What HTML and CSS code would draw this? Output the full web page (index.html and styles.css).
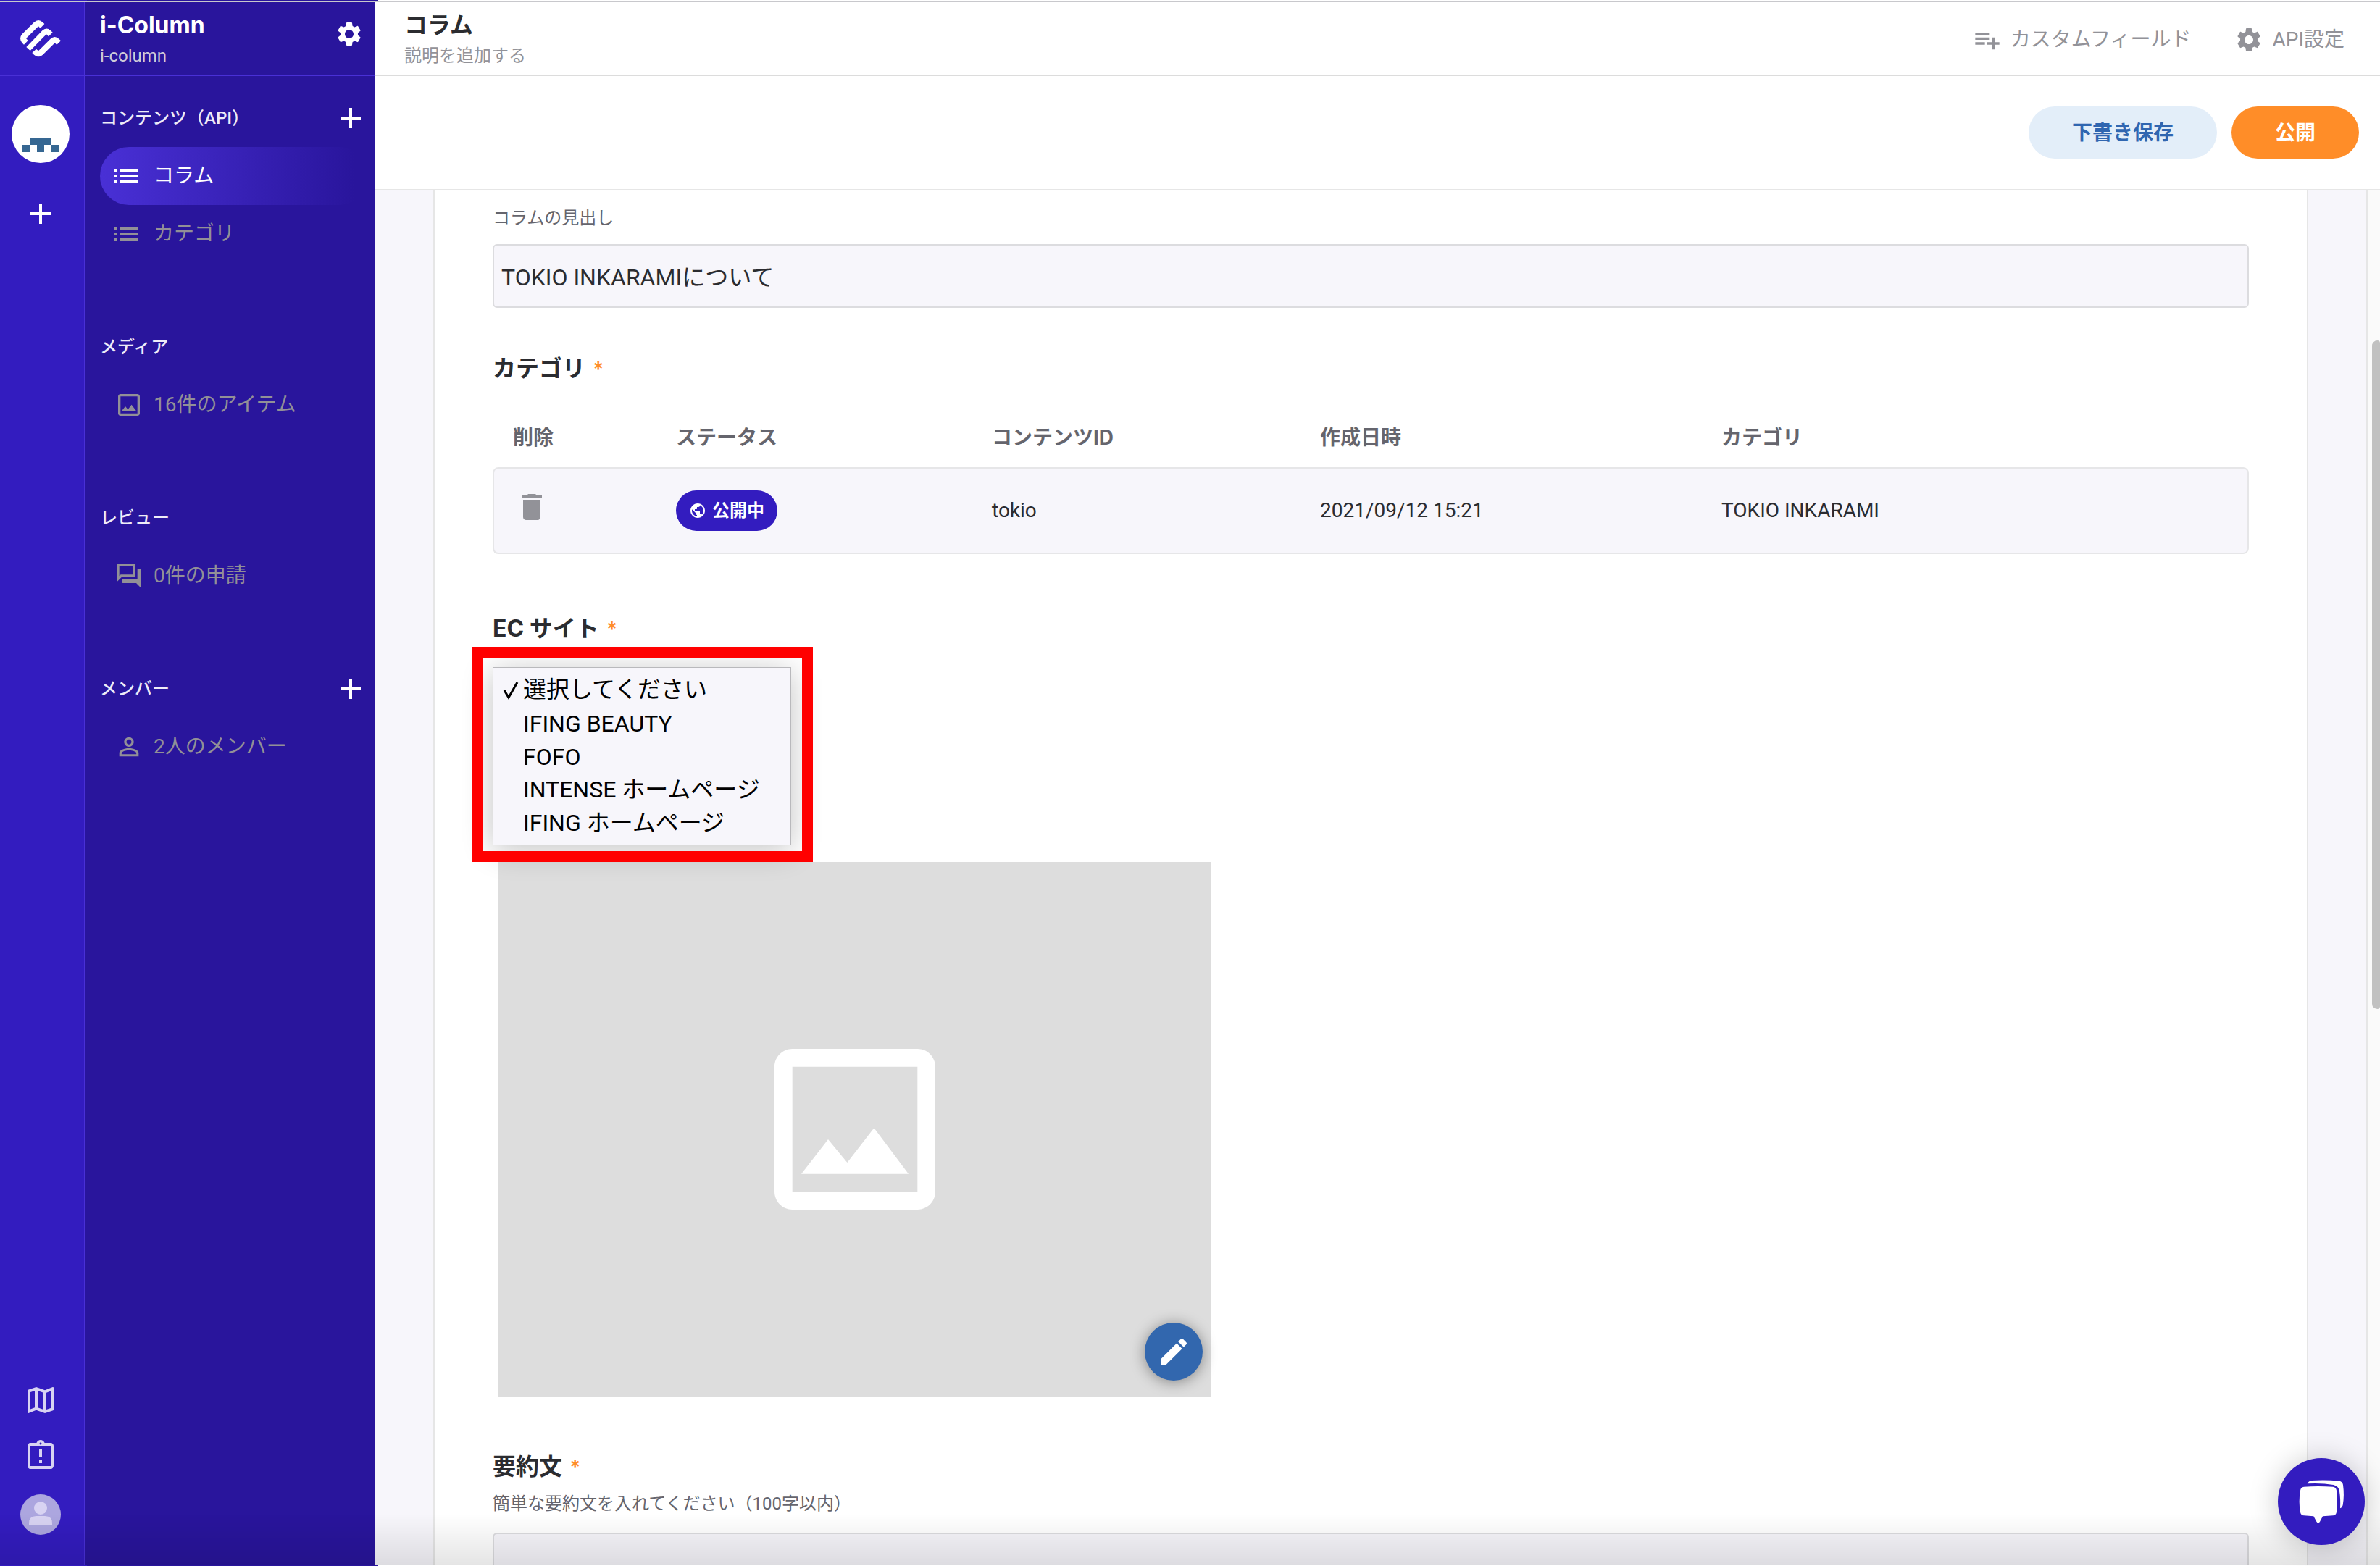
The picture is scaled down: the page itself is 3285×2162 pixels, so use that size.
FILE: index.html
```html
<!DOCTYPE html>
<html lang="ja">
<head>
<meta charset="utf-8">
<title>コラム | i-Column</title>
<link rel="stylesheet" href="styles.css">
</head>
<body>
<svg class="defs" aria-hidden="true">
  <symbol id="i-add" viewBox="0 0 24 24"><path d="M19 13h-6v6h-2v-6H5v-2h6V5h2v6h6z"/></symbol>
  <symbol id="i-gear" viewBox="0 0 24 24"><path d="M19.14 12.94c.04-.3.06-.61.06-.94 0-.32-.02-.64-.07-.94l2.03-1.58c.18-.14.23-.41.12-.61l-1.92-3.32c-.12-.22-.37-.29-.59-.22l-2.39.96c-.5-.38-1.03-.7-1.62-.94l-.36-2.54c-.04-.24-.24-.41-.48-.41h-3.84c-.24 0-.43.17-.47.41l-.36 2.54c-.59.24-1.13.57-1.62.94l-2.39-.96c-.22-.08-.47 0-.59.22L2.74 8.87c-.12.21-.08.47.12.61l2.03 1.58c-.05.3-.09.63-.09.94s.02.64.07.94l-2.03 1.58c-.18.14-.23.41-.12.61l1.92 3.32c.12.22.37.29.59.22l2.39-.96c.5.38 1.03.7 1.62.94l.36 2.54c.05.24.24.41.48.41h3.84c.24 0 .44-.17.47-.41l.36-2.54c.59-.24 1.13-.56 1.62-.94l2.39.96c.22.08.47 0 .59-.22l1.92-3.32c.12-.22.07-.47-.12-.61l-2.01-1.58zM12 15.6c-1.98 0-3.6-1.62-3.6-3.6s1.62-3.6 3.6-3.6 3.6 1.62 3.6 3.6-1.62 3.6-3.6 3.6z"/></symbol>
  <symbol id="i-list" viewBox="0 0 40 40"><path d="M0 10h4v4H0zM8 10h24v4H8zM0 18h4v4H0zM8 18h24v4H8zM0 26h4v4H0zM8 26h24v4H8z"/></symbol>
  <symbol id="i-image" viewBox="0 0 24 24"><path d="M19 5v14H5V5h14m0-2H5c-1.100 0-2 .9-2 2v14c0 1.100.9 2 2 2h14c1.100 0 2-.9 2-2V5c0-1.100-.9-2-2-2zm-4.860 8.860l-3 3.870L9 13.140 6 17h12l-3.860-5.140z"/></symbol>
</svg>

<div class="window">
<div class="shell">
  <nav class="rail" aria-label="サービス">
    <a class="logo" href="#" aria-label="ホーム">
      <svg viewBox="80 80 180 160"><path d="M186 100l-7-7q-18-16-36 0l-50 50q-14 17 0 35l8 8 17-17-8-9 51-50 8 8zM111 196l66-68q17-16 34-1l9 8-17 17-9-9-67 68zM254 170l-8-8q-17-16-35 0l-50 50-9-8-17 16 8 8q18 16 36 0l50-49 8 7z"/></svg>
    </a>
    <a class="service" href="#" aria-label="i-Column">
      <svg viewBox="0 0 80 80"><path d="M25 45h30v10H25zM15 55h10v10H15zM35 55h10v10H35zM55 55h10v10H55z"/></svg>
    </a>
    <button class="icon-btn" aria-label="サービスを追加"><svg class="i48"><use href="#i-add"/></svg></button>
    <div class="rail-foot">
      <a href="#" aria-label="ガイド"><svg class="i48" viewBox="0 0 24 24"><path d="M20.500 3l-.16.030L15 5.100 9 3 3.360 4.900c-.21.070-.36.250-.36.480V20.500c0 .28.220.5.500.5l.16-.030L9 18.900l6 2.100 5.640-1.900c.21-.070.360-.250.360-.480V3.500c0-.28-.22-.5-.5-.5zM10 5.470l4 1.400v11.660l-4-1.400V5.470zm-5 .99l3-1.010v11.700l-3 1.160V6.460zm14 11.080l-3 1.010V6.860l3-1.160v11.840z"/></svg></a>
      <a href="#" aria-label="お知らせ"><svg class="i48" viewBox="0 0 24 24"><path d="M11 15h2v2h-2zm0-8h2v6h-2z"/><path d="M19 3h-4.180C14.400 1.840 13.300 1 12 1s-2.400.84-2.820 2H5c-1.100 0-2 .9-2 2v14c0 1.100.9 2 2 2h14c1.100 0 2-.9 2-2V5c0-1.100-.9-2-2-2zm-7-.250c.41 0 .75.340.75.750s-.34.750-.75.750-.75-.34-.75-.75.340-.750.750-.750zM19 19H5V5h14v14z"/></svg></a>
      <a class="user" href="#" aria-label="アカウント"><svg viewBox="0 0 56 56"><circle cx="28" cy="19" r="9"/><path d="M12 42v-2q0-10 10-10h12q10 0 10 10v2z"/></svg></a>
    </div>
  </nav>

  <aside class="sidebar">
    <header class="side-head">
      <div class="names">
        <strong class="service-name">i-Column</strong>
        <span class="service-id">i-column</span>
      </div>
      <button class="icon-btn gear" aria-label="設定"><svg class="i40"><use href="#i-gear"/></svg></button>
    </header>
    <div class="side-body">
      <section>
        <h2 class="side-title">コンテンツ（API）<button class="icon-btn" aria-label="APIを追加"><svg class="i48"><use href="#i-add"/></svg></button></h2>
        <a class="side-item active" href="#"><svg class="i40"><use href="#i-list"/></svg>コラム</a>
        <a class="side-item" href="#"><svg class="i40"><use href="#i-list"/></svg>カテゴリ</a>
      </section>
      <section>
        <h2 class="side-title">メディア</h2>
        <a class="side-item" href="#"><svg class="i40"><use href="#i-image"/></svg>16件のアイテム</a>
      </section>
      <section>
        <h2 class="side-title">レビュー</h2>
        <a class="side-item" href="#"><svg class="i40" viewBox="0 0 24 24"><path d="M15 4v7H5.170L4 12.170V4h11m1-2H3c-.55 0-1 .45-1 1v14l4-4h10c.55 0 1-.45 1-1V3c0-.55-.45-1-1-1zm5 4h-2v9H6v2c0 .55.450 1 1 1h11l4 4V7c0-.55-.45-1-1-1z"/></svg>0件の申請</a>
      </section>
      <section>
        <h2 class="side-title">メンバー<button class="icon-btn" aria-label="メンバーを追加"><svg class="i48"><use href="#i-add"/></svg></button></h2>
        <a class="side-item" href="#"><svg class="i40" viewBox="0 0 24 24"><path d="M12 5.900c1.160 0 2.100.94 2.100 2.100s-.94 2.100-2.100 2.100S9.900 9.160 9.900 8s.94-2.100 2.100-2.100m0 9c2.970 0 6.100 1.460 6.100 2.100v1.100H5.900V17c0-.64 3.130-2.100 6.100-2.100M12 4C9.790 4 8 5.790 8 8s1.790 4 4 4 4-1.790 4-4-1.790-4-4-4zm0 9c-2.670 0-8 1.340-8 4v3h16v-3c0-2.660-5.330-4-8-4z"/></svg>2人のメンバー</a>
      </section>
    </div>
  </aside>

  <main class="main">
    <header class="main-head">
      <div class="names">
        <h1 class="page-title">コラム</h1>
        <span class="page-desc">説明を追加する</span>
      </div>
      <a class="head-link" href="#"><svg class="i40" viewBox="0 0 24 24"><path d="M14 10H2v2h12v-2zm0-4H2v2h12V6zm4 8v-4h-2v4h-4v2h4v4h2v-4h4v-2h-4zM2 16h8v-2H2v2z"/></svg>カスタムフィールド</a>
      <a class="head-link" href="#"><svg class="i40"><use href="#i-gear"/></svg>API設定</a>
    </header>
    <div class="actions">
      <button class="btn draft">下書き保存</button>
      <button class="btn publish">公開</button>
    </div>
    <div class="scroller">
      <div class="content">
        <form class="card">
          <label class="hint" for="heading">コラムの見出し</label>
          <input class="text-input" id="heading" type="text" value="TOKIO INKARAMIについて">

          <h3 class="field-title">カテゴリ<span class="req">*</span></h3>
          <table class="refs">
            <colgroup><col class="c-del"><col class="c-status"><col class="c-id"><col class="c-date"><col></colgroup>
            <thead><tr><th>削除</th><th>ステータス</th><th>コンテンツID</th><th>作成日時</th><th>カテゴリ</th></tr></thead>
            <tbody><tr>
              <td><button class="icon-btn trash" type="button" aria-label="削除"><svg class="i48" viewBox="0 0 24 24"><path d="M6 19c0 1.100.9 2 2 2h8c1.100 0 2-.9 2-2V7H6v12zM19 4h-3.500l-1-1h-5l-1 1H5v2h14V4z"/></svg></button></td>
              <td><span class="badge"><svg viewBox="0 0 24 24"><path d="M12 2C6.480 2 2 6.480 2 12s4.480 10 10 10 10-4.480 10-10S17.520 2 12 2zm-1 17.930c-3.950-.49-7-3.850-7-7.930 0-.62.080-1.210.21-1.790L9 15v1c0 1.100.9 2 2 2v1.930zm6.900-2.540c-.26-.81-1-1.390-1.900-1.390h-1v-3c0-.55-.45-1-1-1H8v-2h2c.55 0 1-.45 1-1V7h2c1.100 0 2-.9 2-2v-.41c2.930 1.190 5 4.060 5 7.410 0 2.080-.8 3.970-2.100 5.390z"/></svg>公開中</span></td>
              <td>tokio</td>
              <td>2021/09/12 15:21</td>
              <td>TOKIO INKARAMI</td>
            </tr></tbody>
          </table>

          <label class="field-title" for="ec">EC サイト<span class="req">*</span></label>
          <div class="menu">
            <select id="ec" size="5">
              <option selected>選択してください</option>
              <option>IFING BEAUTY</option>
              <option>FOFO</option>
              <option>INTENSE ホームページ</option>
              <option>IFING ホームページ</option>
            </select>
            <svg class="check" viewBox="0 0 22 32"><path d="M2 16l6 10L20 5"/></svg>
          </div>

          <div class="picture">
            <svg class="placeholder"><use href="#i-image"/></svg>
            <button class="edit" type="button" aria-label="画像を編集"><svg class="i48" viewBox="0 0 24 24"><path d="M3 17.250V21h3.750L17.810 9.940l-3.750-3.750L3 17.250zM20.710 7.040c.39-.39.390-1.020 0-1.410l-2.340-2.340c-.39-.39-1.020-.39-1.410 0l-1.830 1.830 3.750 3.750 1.830-1.830z"/></svg></button>
          </div>

          <label class="field-title" for="summary">要約文<span class="req">*</span></label>
          <span class="hint">簡単な要約文を入れてください（100字以内）</span>
          <textarea class="text-input area" id="summary"></textarea>
        </form>
      </div>
      <div class="track"><div class="thumb"></div></div>
    </div>
  </main>
</div>
</div>
<div class="shade"></div>
<button class="chat" aria-label="チャット">
  <svg viewBox="177 158 360 360"><path d="M285 277q57-4 120 0 13 1 15 15 6 46 0 90-2 12-15 14-20 2-42 3l-12 22q-7 12-14 0l-12-22q-20-1-40-3-13-2-15-14-8-45 0-90 2-14 15-15z"/><path d="M299 264q5-11 18-13 58-4 114 2 14 2 16 16 6 44-1 84-2 10-11 13 2-40-3-70-3-22-25-27-48-8-108-5z"/></svg>
</button>
</body>
</html>
```
FILE: styles.css
```css
* { box-sizing: border-box; }

:root {
  --blue: #331cbf;
  --navy: #29159c;
  --line: #4930d6;
  --ink: #2b2c30;
  --sub: #65656d;
  --mute: #929298;
  --field: #f7f6fb;
  --orange: #ff8d28;
}

body {
  margin: 0;
  color: var(--ink);
  font-family: Roboto, "Noto Sans CJK JP", sans-serif;
  font-size: 28px;
  line-height: 40px;
}

h1, h2, h3 { margin: 0; }
a { color: inherit; text-decoration: none; }
svg { display: block; fill: currentColor; flex: none; }
button, input, select, textarea { font: inherit; color: inherit; }
button { border: 0; padding: 0; background: none; cursor: pointer; }

.defs { display: none; }
.i40 { width: 40px; height: 40px; }
.i48 { width: 48px; height: 48px; }
.icon-btn { display: block; color: #fff; }

.window {
  height: 100vh;
  padding: 2px 0;
  background: linear-gradient(to right, var(--blue) 120px, var(--navy) 120px 522px, #fff 522px);
}
.shell {
  display: flex;
  height: 100%;
  border-top: 1px solid #c8c8cc;
}

.rail {
  display: flex;
  flex-direction: column;
  align-items: center;
  flex: none;
  width: 118px;
  padding-right: 4px;
  border-right: 2px solid var(--line);
  background: var(--blue);
  color: #fff;
}
.logo {
  display: flex;
  align-items: center;
  justify-content: center;
  align-self: stretch;
  height: 102px;
  margin-right: -4px;
  padding-right: 4px;
  border-bottom: 2px solid var(--line);
}
.logo svg { width: 60px; height: 54px; }
.service {
  width: 80px;
  height: 80px;
  margin: 40px 0 46px;
  border-radius: 50%;
  background: #fff;
  color: #366792;
}
.rail-foot {
  display: flex;
  flex-direction: column;
  align-items: center;
  gap: 29px;
  margin-top: auto;
  padding-bottom: 41px;
  color: #d8d3f2;
}
.user {
  width: 56px;
  height: 56px;
  border-radius: 50%;
  background: #aca6df;
}

.sidebar {
  flex: none;
  width: 400px;
  background: var(--navy);
  color: #fff;
}
.side-head {
  display: flex;
  justify-content: space-between;
  height: 102px;
  padding: 12px 16px 0 20px;
  border-bottom: 2px solid var(--line);
}
.names { display: flex; flex-direction: column; gap: 2px; }
.service-name {
  font-family: Inter, sans-serif;
  font-size: 32px;
}
.service-id { font-size: 24px; color: #cfcbd9; }
.gear { height: 64px; }
.side-body {
  display: flex;
  flex-direction: column;
  gap: 76px;
  padding: 18px 10px 0 20px;
}
.side-title {
  display: flex;
  align-items: center;
  justify-content: space-between;
  height: 80px;
  color: #eeecf8;
  font-size: 24px;
  font-weight: 500;
}
.side-item {
  display: flex;
  align-items: center;
  gap: 14px;
  height: 80px;
  padding-left: 20px;
  border-radius: 40px;
  color: #929097;
}
.active {
  background: linear-gradient(to right, var(--line), var(--navy) 95%);
  color: #fff;
}

.main {
  display: flex;
  flex-direction: column;
  flex: 1;
  min-width: 0;
  background: #fff;
}
.main-head {
  display: flex;
  flex: none;
  height: 102px;
  padding: 12px 49px 0 40px;
  border-bottom: 2px solid #dcdcdc;
}
.main-head .names { flex: 1; }
.page-title { font-size: 32px; line-height: 40px; }
.page-desc { font-size: 24px; color: var(--mute); }
.head-link {
  display: flex;
  align-items: center;
  gap: 12px;
  height: 80px;
  margin-left: 60px;
  color: var(--mute);
}
.actions {
  display: flex;
  align-items: center;
  justify-content: flex-end;
  flex: none;
  gap: 20px;
  height: 158px;
  padding-right: 29px;
  border-bottom: 2px solid #e6e6e6;
}
.btn {
  height: 72px;
  padding: 2px 60px 0;
  border-radius: 36px;
  font-weight: 700;
}
.draft { background: #e3eef9; color: #3066b0; }
.publish { background: var(--orange); color: #fff; }

.scroller { display: flex; flex: 1; min-height: 0; }
.content {
  flex: 1;
  min-width: 0;
  padding: 0 80px;
  overflow: hidden;
  background: var(--field);
}
.card {
  display: flex;
  flex-direction: column;
  align-items: flex-start;
  min-height: 100%;
  padding: 20px 80px;
  border: solid #e6e6e6;
  border-width: 0 2px;
  background: #fff;
}
.hint {
  color: var(--sub);
  font-size: 24px;
  line-height: 36px;
}
.text-input {
  width: 100%;
  height: 88px;
  margin: 18px 0 60px;
  padding: 0 10px 2px;
  border: 2px solid #dcdcdf;
  border-radius: 6px;
  background: var(--field);
  font-size: 32px;
  outline: 0;
}
.area { height: 240px; margin-top: 22px; resize: none; }
.field-title {
  font-family: Inter, "Noto Sans CJK JP", sans-serif;
  font-size: 32px;
  font-weight: 700;
  line-height: 48px;
}
.req {
  margin-left: 10px;
  color: var(--orange);
  font-size: 28px;
  line-height: 1;
}

.refs {
  width: 100%;
  margin: 30px 0 79px;
  border-collapse: separate;
  border-spacing: 0;
  table-layout: fixed;
}
.c-del { width: 225px; }
.c-status { width: 436px; }
.c-id { width: 453px; }
.c-date { width: 554px; }
.refs th {
  height: 82px;
  padding: 0 28px;
  color: var(--sub);
  font-family: Inter, "Noto Sans CJK JP", sans-serif;
  font-weight: 700;
  text-align: left;
}
.refs td {
  height: 120px;
  padding: 0 28px;
  border: solid #e6e6e8;
  border-width: 2px 0;
  background: var(--field);
}
.refs td:first-child { border-left-width: 2px; border-radius: 8px 0 0 8px; }
.refs td:last-child { border-right-width: 2px; border-radius: 0 8px 8px 0; }
.trash { padding-bottom: 10px; color: var(--mute); }
.badge {
  display: flex;
  align-items: center;
  gap: 8px;
  width: max-content;
  height: 56px;
  padding: 0 18px;
  border-radius: 28px;
  background: var(--blue);
  color: #fff;
  font-size: 24px;
  font-weight: 700;
}
.badge svg { width: 24px; height: 24px; }

/* Opened drop-down, with the red call-out drawn round it */
.menu {
  position: relative;
  z-index: 1;
  margin: 29px 0 23px;
  box-shadow: 0 6px 40px rgba(0, 0, 0, .24);
}
.menu::after {
  content: "";
  position: absolute;
  inset: -28px -30px -23px -29px;
  border: 15px solid #f00;
  pointer-events: none;
}
.menu select {
  display: block;
  width: 412px;
  height: 246px;
  padding: 4px 0;
  border: 1px solid #b9b9bc;
  border-radius: 0;
  background: var(--field);
  color: #000;
  font-size: 32px;
  overflow: hidden;
  outline: 0;
}
.menu option {
  display: flex;
  align-items: flex-end;
  height: 46px;
  padding: 0 0 0 41px;
}
.menu option:checked {
  background: var(--field) linear-gradient(var(--field), var(--field));
  color: #000;
}
.check {
  position: absolute;
  left: 14px;
  top: 16px;
  width: 22px;
  height: 32px;
  fill: none;
  stroke: #000;
  stroke-width: 3;
}

.picture {
  position: relative;
  display: grid;
  place-items: center;
  width: 984px;
  height: 738px;
  margin: 0 0 73px 8px;
  background: #ddd;
  color: #fff;
}
.placeholder { width: 296px; height: 296px; }
.edit {
  position: absolute;
  right: 12px;
  bottom: 22px;
  display: grid;
  place-items: center;
  width: 80px;
  height: 80px;
  border-radius: 50%;
  background: #3267ae;
  color: #fff;
  box-shadow: 0 2px 20px rgba(0, 0, 0, .4);
}
.picture + .field-title { margin-bottom: 9px; }

.track {
  display: grid;
  grid-template-rows: 207fr 923fr 767fr;
  flex: none;
  width: 19px;
  padding-left: 6px;
  border-left: 2px solid #e6e6e6;
  background: #fafafa;
}
.thumb { grid-row: 2; border-radius: 8px 4px 4px 8px; background: #c1c1c1; }

.shade {
  position: fixed;
  inset: auto 0 2px;
  height: 70px;
  background: linear-gradient(rgba(0, 0, 0, 0), rgba(0, 0, 0, .1));
  pointer-events: none;
}
.chat {
  position: fixed;
  right: 21px;
  bottom: 29px;
  width: 120px;
  height: 120px;
  border-radius: 50%;
  background: var(--blue);
  color: #fff;
  box-shadow: 0 2px 40px rgba(0, 0, 0, .22);
}
```
